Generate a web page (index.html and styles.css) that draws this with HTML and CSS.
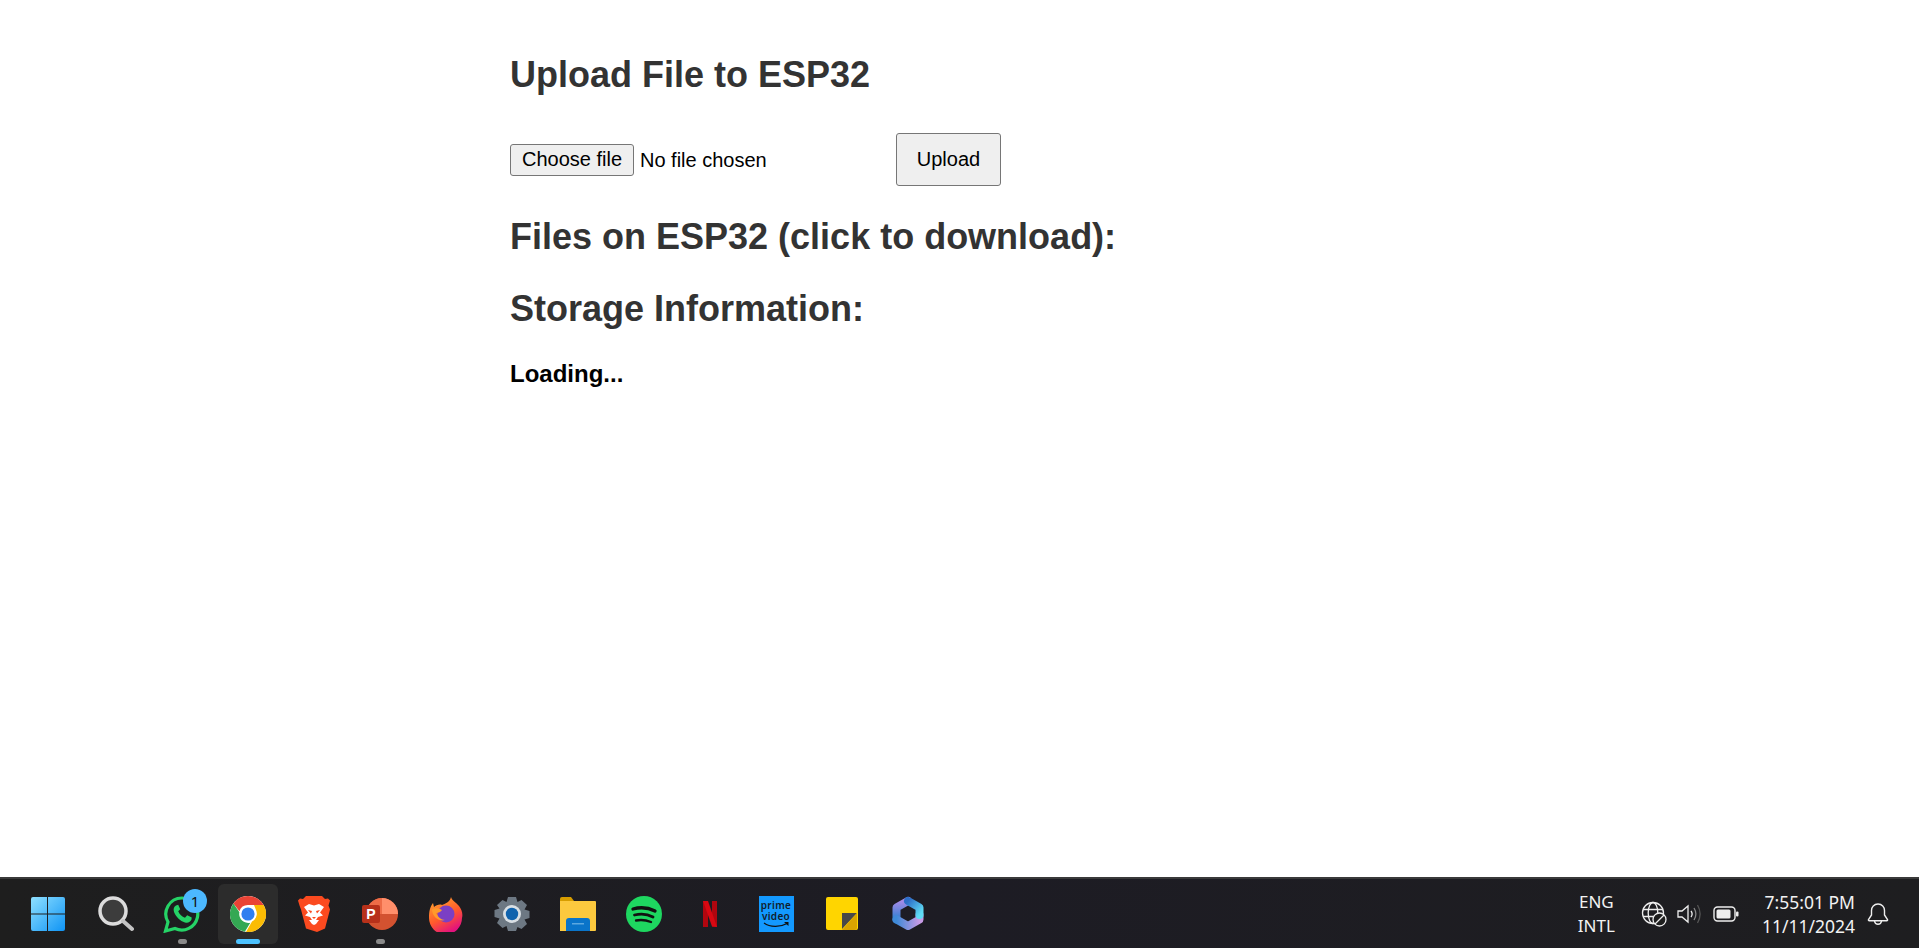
FILE: index.html
```html
<!DOCTYPE html>
<html lang="en">
<head>
    <meta charset="UTF-8">
    <meta name="viewport" content="width=device-width, initial-scale=1.0">
    <title>ESP32 File Manager</title>
    <link rel="stylesheet" href="styles.css">
</head>
<body>
    <main class="page">
        <div class="container">
            <h2>Upload File to ESP32</h2>
            <form class="upload-form">
                <label class="file-field">
                    <input class="file-input" type="file" id="fileInput">
                    <span class="file-btn">Choose file</span>
                    <span class="file-name">No file chosen</span>
                </label>
                <button class="upload-btn" type="button">Upload</button>
            </form>
            <h2 class="files-title">Files on ESP32 (click to download):</h2>
            <h2 class="storage-title">Storage Information:</h2>
            <p class="loading">Loading...</p>
        </div>
    </main>

    <footer class="taskbar">
        <div class="apps">
            <div class="app">
                <svg class="start-icon" width="36" height="36" viewBox="0 0 36 36">
                    <defs>
                        <linearGradient id="winGrad" x1="0" y1="0" x2="1" y2="1">
                            <stop offset="0" stop-color="#8fe0ff"/>
                            <stop offset="1" stop-color="#0f94f5"/>
                        </linearGradient>
                    </defs>
                    <path fill="url(#winGrad)" d="M1 3a2 2 0 0 1 2-2h14v16.500H1zM18 1h15a2 2 0 0 1 2 2v14.500H18zM1 18.500h16V35H3a2 2 0 0 1-2-2zM18 18.500h17V33a2 2 0 0 1-2 2H18z"/>
                </svg>
            </div>
            <div class="app">
                <svg width="36" height="36" viewBox="0 0 36 36">
                    <circle cx="15" cy="15" r="13" fill="#3c3c3c" stroke="#dcdcdc" stroke-width="3.500"/>
                    <path d="M25 25l9 8" stroke="#c4c4c4" stroke-width="4" stroke-linecap="round"/>
                </svg>
            </div>
            <div class="app has-dot">
                <svg width="38" height="38" viewBox="0 0 38 38">
                    <path fill="none" stroke="#25d366" stroke-width="3.200" d="M19 3a16 16 0 0 0-14 24L2.500 36l9.500-2.500A16 16 0 1 0 19 3z"/>
                    <path fill="#25d366" d="M13 10.500c-2 1-3 3.500-2 6.500 2 5 6 9 11 10.500 3 .8 5.500-.5 6.500-3l.2-2-4.500-2.300-2.200 2.500c-3-1-5.500-3.500-6.800-6.500l2-2-2-4.500z"/>
                </svg>
                <span class="badge">1</span>
            </div>
            <div class="app active">
                <svg width="36" height="36" viewBox="0 0 36 36">
                    <circle cx="18" cy="18" r="18" fill="#fff"/>
                    <path fill="#ea4335" d="M18 0a18 18 0 0 1 15.600 9H18a9 9 0 0 0-8.600 6.300L3.400 7.400A18 18 0 0 1 18 0z"/>
                    <path fill="#34a853" d="M3.400 7.400l6 8.900A9 9 0 0 0 20.300 26.700L14.800 35.700A18 18 0 0 1 3.400 7.400z"/>
                    <path fill="#fbbc04" d="M33.600 9A18 18 0 0 1 16 35.900l6-10.400A9 9 0 0 0 25.800 13.500L24 9z"/>
                    <circle cx="18" cy="18" r="8.300" fill="#fff"/>
                    <circle cx="18" cy="18" r="6.600" fill="#2f7ff0"/>
                </svg>
                <span class="running"></span>
            </div>
            <div class="app">
                <svg width="32" height="36" viewBox="0 0 32 36">
                    <path fill="#fb4a1f" d="M8 0h16l3 3 3-.5 2 2-1.500 5 1.500 4-5 19-8 3.500L8 32.500 3 13.500 1.500 9.500 0 4.500l2-2L5 3z"/>
                    <path fill="#fff" d="M6 11l5-3 5 1.500L21 8l5 3-4 5.500 3 3-5 1.500-2 3h3l-3 4-2 1-2-1-3-4h3l-2-3-5-1.500 3-3z"/>
                    <path fill="#fb4a1f" d="M10 14l4 1-1 2.500zM22 14l-4 1 1 2.500zM14 21h4l-2 2z"/>
                </svg>
            </div>
            <div class="app has-dot">
                <svg width="36" height="34" viewBox="0 0 36 34">
                    <circle cx="20" cy="17" r="16" fill="#d35230"/>
                    <path fill="#ff8f6b" d="M20 1a16 16 0 0 1 16 16H20z"/>
                    <path fill="#ed6c47" d="M20 1v16H4A16 16 0 0 1 20 1z"/>
                    <rect x="0" y="8" width="18" height="18" rx="2" fill="#b7311a"/>
                    <text class="ppt-letter" x="9" y="22" text-anchor="middle">P</text>
                </svg>
            </div>
            <div class="app">
                <svg width="34" height="36" viewBox="0 0 34 36">
                    <defs>
                        <linearGradient id="foxGrad" x1="0" y1="0" x2="0.500" y2="1">
                            <stop offset="0" stop-color="#ffb02e"/>
                            <stop offset="0.600" stop-color="#ff5a2c"/>
                            <stop offset="1" stop-color="#e3127e"/>
                        </linearGradient>
                    </defs>
                    <path fill="url(#foxGrad)" d="M22 1c1 4 5 5 8 9 3 4 4 8 3 12a16.500 16.500 0 0 1-33 0C0 15 1 11 4 7l1 4c2-2 6-3 8-2 3-1 8-3 9-8z"/>
                    <circle cx="17" cy="18" r="8.500" fill="#7b3fc4"/>
                    <path fill="#ff9a2c" d="M3 13c3-1 7-1 10 1-1 2-4 3-6 3 2 4 5 7 9 7-6 2-13-3-13-11z"/>
                </svg>
            </div>
            <div class="app">
                <svg width="36" height="36" viewBox="0 0 36 36">
                    <path fill="#6d7883" d="M14 1h8l1.500 5 4-2 5.500 5-2.500 4.500 5 1.500v7l-5 1.500 2.500 4.500-5.500 5-4-2L22 35h-8l-1.500-5-4 2L3 27l2.500-4.500-5-1.500v-7l5-1.500L3 9l5.500-5 4 2z"/>
                    <circle cx="18" cy="18" r="9" fill="#d9dfe4"/>
                    <circle cx="18" cy="18" r="6.200" fill="#0f62ad"/>
                </svg>
            </div>
            <div class="app">
                <svg width="36" height="34" viewBox="0 0 36 34">
                    <path fill="#d79d00" d="M0 2a2 2 0 0 1 2-2h9l3 4h-14z"/>
                    <path fill="#fcc93e" d="M0 4h35a1 1 0 0 1 1 1v28a1 1 0 0 1-1 1H0z"/>
                    <path fill="#0a74c9" d="M6 24a3 3 0 0 1 3-3h18a3 3 0 0 1 3 3v10H6z"/>
                    <rect x="12" y="26" width="12" height="1.500" fill="#5ca8e0"/>
                </svg>
            </div>
            <div class="app">
                <svg width="36" height="36" viewBox="0 0 36 36">
                    <circle cx="18" cy="18" r="18" fill="#1ed760"/>
                    <path fill="none" stroke="#111" stroke-width="3.300" stroke-linecap="round" d="M7 13c7-2 15-1.500 22 2"/>
                    <path fill="none" stroke="#111" stroke-width="2.800" stroke-linecap="round" d="M8.500 19c6-1.500 13-1 18.500 2"/>
                    <path fill="none" stroke="#111" stroke-width="2.300" stroke-linecap="round" d="M10 24.500c5-1 10-.5 15 1.500"/>
                </svg>
            </div>
            <div class="app">
                <svg width="14" height="26" viewBox="0 0 14 26">
                    <path fill="#b1060f" d="M0 0h5v26l-5 .500zM9 0h5v26l-5-.500z"/>
                    <path fill="#d80812" d="M0 0h5l9 26-5-.500z"/>
                </svg>
            </div>
            <div class="app">
                <div class="prime">
                    <span>prime</span>
                    <span>video</span>
                    <svg width="26" height="7" viewBox="0 0 26 7">
                        <path fill="none" stroke="#111" stroke-width="1.300" d="M1 1c6 4.500 16 4.500 23 .5"/>
                        <path fill="#111" d="M21 0h4.500v4z"/>
                    </svg>
                </div>
            </div>
            <div class="app">
                <svg width="32" height="33" viewBox="0 0 32 33">
                    <path fill="#ffd500" d="M2 0h28a2 2 0 0 1 2 2v29a2 2 0 0 1-2 2H2a2 2 0 0 1-2-2V2a2 2 0 0 1 2-2z"/>
                    <path fill="#484848" d="M16 16h15L16 32z"/>
                    <path fill="#d9a400" d="M31 16v15a2 2 0 0 1-2 2H16z"/>
                </svg>
            </div>
            <div class="app">
                <svg width="32" height="35" viewBox="0 0 32 35">
                    <defs>
                        <linearGradient id="copA" x1="0" y1="0" x2="0" y2="1">
                            <stop offset="0" stop-color="#a58be8"/>
                            <stop offset="1" stop-color="#2f7fd0"/>
                        </linearGradient>
                        <linearGradient id="copB" x1="0" y1="0" x2="1" y2="1">
                            <stop offset="0" stop-color="#2d6fc8"/>
                            <stop offset="1" stop-color="#5fdcf5"/>
                        </linearGradient>
                        <linearGradient id="copC" x1="0" y1="0" x2="1" y2="0">
                            <stop offset="0" stop-color="#3f8ad8"/>
                            <stop offset="1" stop-color="#c79be6"/>
                        </linearGradient>
                    </defs>
                    <g fill="none" stroke-width="8" stroke-linejoin="round" stroke-linecap="round">
                        <path stroke="url(#copA)" d="M16 5L4.500 11.500v12"/>
                        <path stroke="url(#copC)" d="M4.500 23.500L16 30l11.500-6.500V19"/>
                        <path stroke="url(#copB)" d="M16 5l11.500 6.500V19"/>
                    </g>
                </svg>
            </div>
        </div>

        <div class="tray">
            <div class="lang">
                <span>ENG</span>
                <span>INTL</span>
            </div>
            <div class="tray-icons">
                <svg width="26" height="26" viewBox="0 0 26 26" fill="none" stroke="#eee" stroke-width="1.300">
                    <circle cx="12" cy="12" r="10.500"/>
                    <ellipse cx="12" cy="12" rx="4.800" ry="10.500"/>
                    <path d="M2 8.500h20M2 15.500h12"/>
                    <circle cx="18.500" cy="18.500" r="6.500" fill="#1e1e1e"/>
                    <path d="M14 23l9-9"/>
                </svg>
                <svg class="volume" width="26" height="22" viewBox="0 0 26 22" fill="none" stroke-width="1.300">
                    <path stroke="#eee" d="M1 8h4l6-5v16l-6-5H1z"/>
                    <path stroke="#eee" d="M14 8c1.500 2 1.500 4 0 6"/>
                    <path stroke="#888" d="M17 5c2.500 4 2.500 8 0 12"/>
                    <path stroke="#555" d="M20.500 2c3.500 6 3.500 12 0 18"/>
                </svg>
                <svg class="battery" width="26" height="16" viewBox="0 0 26 16" fill="none">
                    <rect x="1" y="1" width="21" height="14" rx="3.500" stroke="#eee" stroke-width="1.400"/>
                    <rect x="3.500" y="3.500" width="14" height="9" rx="1.500" fill="#eee"/>
                    <rect x="23" y="5.500" width="2.500" height="5" rx="1" fill="#eee"/>
                </svg>
            </div>
            <div class="clock">
                <span>7:55:01 PM</span>
                <span>11/11/2024</span>
            </div>
            <svg class="bell" width="22" height="24" viewBox="0 0 22 24" fill="none" stroke="#eee" stroke-width="1.400">
                <path d="M11 2c-4 0-6.500 3-6.500 6.500v4.500L1.500 17.500c-.3.800 0 1.200.8 1.200h17.400c.8 0 1.100-.4.800-1.200L17.500 13V8.500C17.500 5 15 2 11 2z"/>
                <path d="M7.500 19c.3 2 1.700 3.300 3.500 3.300s3.200-1.300 3.500-3.300"/>
            </svg>
        </div>
    </footer>
</body>
</html>
```

FILE: styles.css
```css
* {
    box-sizing: border-box;
}

html, body {
    height: 100%;
}

body {
    font-family: "Liberation Sans", Arial, sans-serif;
    background-color: #fff;
    margin: 0;
    display: flex;
    flex-direction: column;
    height: 100vh;
    overflow: hidden;
}

.page {
    flex: 1;
}

/* main column */
.container {
    width: 899px;
    margin: 0 auto;
    padding-top: 54px;
}

h2 {
    color: #333;
    font-size: 36px;
    line-height: 42px;
    margin: 0;
}

.upload-form {
    display: flex;
    align-items: center;
    margin-top: 37px;
    height: 53px;
}

.file-field {
    display: flex;
    align-items: center;
    width: 386px;
    font-size: 20px;
    color: #000;
}

.file-input {
    display: none;
}

.file-btn {
    width: 124px;
    height: 32px;
    line-height: 29px;
    text-align: center;
    background-color: #efefef;
    border: 1px solid #767676;
    border-radius: 3px;
}

.file-name {
    margin: 2px 0 0 6px;
}

.upload-btn {
    font-family: "Liberation Sans", Arial, sans-serif;
    font-size: 20px;
    color: #000;
    width: 105px;
    height: 53px;
    padding: 0;
    background-color: #efefef;
    border: 1px solid #767676;
    border-radius: 3px;
}

.files-title {
    margin-top: 30px;
}

.storage-title {
    margin-top: 30px;
}

.loading {
    font-size: 24px;
    font-weight: bold;
    color: #000;
    margin: 30px 0 0;
}

/* windows taskbar */
.taskbar {
    flex: none;
    height: 71px;
    display: flex;
    align-items: center;
    padding-left: 17px;
    background: linear-gradient(90deg, #1e1e1e, #1d1c24 50%, #1e1e20);
    border-top: 2px solid #3a3a3a;
    color: #f2f2f2;
    font-family: "Noto Sans", "Open Sans", sans-serif;
}

.apps {
    display: flex;
    align-items: center;
}

.app {
    position: relative;
    width: 66px;
    height: 60px;
    display: flex;
    align-items: center;
    justify-content: center;
}

.start-icon {
    margin-left: -4px;
}

.app.active {
    width: 60px;
    margin: 0 3px;
    background-color: #2c2c2c;
    border-radius: 6px;
}

.has-dot::after {
    content: "";
    position: absolute;
    left: 50%;
    bottom: 0;
    width: 9px;
    height: 5px;
    margin-left: -4px;
    background-color: #8a8a8a;
    border-radius: 3px;
}

.running {
    position: absolute;
    left: 50%;
    bottom: 0;
    width: 24px;
    height: 5px;
    margin-left: -12px;
    background-color: #4cc2ff;
    border-radius: 3px;
}

.badge {
    position: absolute;
    top: 5px;
    right: 8px;
    width: 24px;
    height: 24px;
    border-radius: 50%;
    background-color: #4cb8ff;
    color: #111;
    font-size: 15px;
    line-height: 24px;
    text-align: center;
}

.ppt-letter {
    fill: #fff;
    font-family: "Liberation Sans", Arial, sans-serif;
    font-size: 14px;
    font-weight: bold;
}

.prime {
    width: 35px;
    height: 36px;
    background-color: #1399ff;
    color: #10202c;
    font-family: "Noto Sans", sans-serif;
    font-size: 10px;
    font-weight: 600;
    letter-spacing: 0.3px;
    line-height: 11px;
    display: flex;
    flex-direction: column;
    align-items: center;
    padding-top: 4px;
}

.tray {
    margin-left: auto;
    display: flex;
    align-items: center;
    padding-right: 30px;
}

.lang {
    display: flex;
    flex-direction: column;
    align-items: center;
    font-size: 17px;
    line-height: 24px;
}

.tray-icons {
    display: flex;
    align-items: center;
    margin-left: 26px;
}

.volume {
    margin-left: 10px;
}

.battery {
    margin-left: 10px;
}

.clock {
    display: flex;
    flex-direction: column;
    align-items: flex-end;
    font-size: 17.500px;
    line-height: 24px;
    margin-left: 23px;
}

.bell {
    margin-left: 12px;
}
```
